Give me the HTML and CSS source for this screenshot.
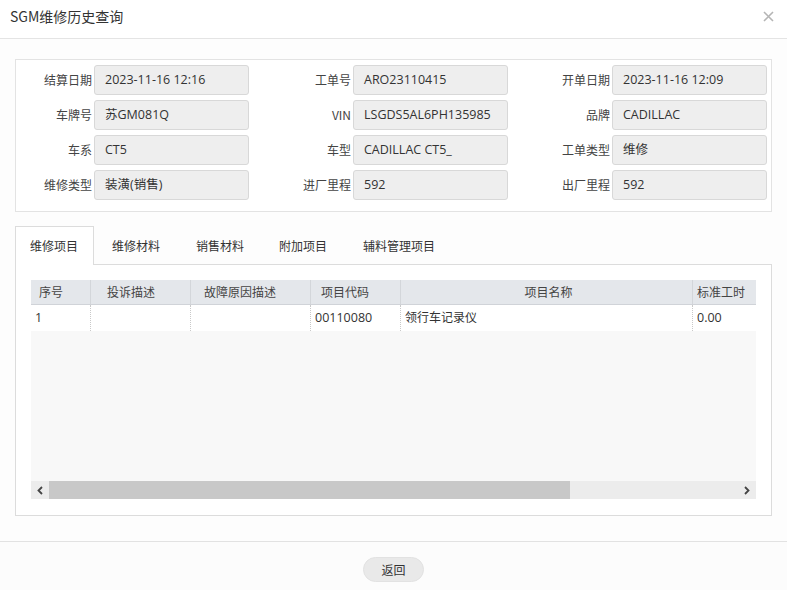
FILE: index.html
```html
<!DOCTYPE html>
<html lang="zh">
<head>
<meta charset="utf-8">
<title>SGM维修历史查询</title>
<link rel="stylesheet" href="styles.css">
</head>
<body>
<div class="dialog">
  <div class="dlg-head">
    <span class="dlg-title">SGM维修历史查询</span>
    <span class="dlg-close">
      <svg width="11" height="11" viewBox="0 0 11 11"><path d="M1 1L10 10M10 1L1 10" stroke="#b5b5b5" stroke-width="1.6" fill="none"/></svg>
    </span>
  </div>
  <div class="dlg-body">
    <div class="form-panel">
      <label class="lbl">结算日期</label><div class="inp">2023-11-16 12:16</div>
      <label class="lbl">工单号</label><div class="inp">ARO23110415</div>
      <label class="lbl">开单日期</label><div class="inp">2023-11-16 12:09</div>
      <label class="lbl">车牌号</label><div class="inp">苏GM081Q</div>
      <label class="lbl">VIN</label><div class="inp">LSGDS5AL6PH135985</div>
      <label class="lbl">品牌</label><div class="inp">CADILLAC</div>
      <label class="lbl">车系</label><div class="inp">CT5</div>
      <label class="lbl">车型</label><div class="inp">CADILLAC CT5_</div>
      <label class="lbl">工单类型</label><div class="inp">维修</div>
      <label class="lbl">维修类型</label><div class="inp">装潢(销售)</div>
      <label class="lbl">进厂里程</label><div class="inp">592</div>
      <label class="lbl">出厂里程</label><div class="inp">592</div>
    </div>

    <div class="tabs">
      <div class="tab-bar">
        <span class="tab active">维修项目</span>
        <span class="tab">维修材料</span>
        <span class="tab">销售材料</span>
        <span class="tab">附加项目</span>
        <span class="tab">辅料管理项目</span>
      </div>
      <div class="tab-panel">
        <div class="grid">
          <div class="grid-head">
            <div class="c c1">序号</div>
            <div class="c c2">投诉描述</div>
            <div class="c c3">故障原因描述</div>
            <div class="c c4">项目代码</div>
            <div class="c c5 center">项目名称</div>
            <div class="c c6">标准工时</div>
          </div>
          <div class="grid-row">
            <div class="c c1">1</div>
            <div class="c c2"></div>
            <div class="c c3"></div>
            <div class="c c4">00110080</div>
            <div class="c c5">领行车记录仪</div>
            <div class="c c6">0.00</div>
          </div>
          <div class="grid-fill"></div>
          <div class="hscroll">
            <span class="arrow">
              <svg width="6" height="9" viewBox="0 0 6 9"><path d="M5 1L1.5 4.5L5 8" stroke="#444" stroke-width="1.8" fill="none"/></svg>
            </span>
            <span class="track"><span class="thumb"></span></span>
            <span class="arrow">
              <svg width="6" height="9" viewBox="0 0 6 9"><path d="M1 1L4.5 4.5L1 8" stroke="#444" stroke-width="1.8" fill="none"/></svg>
            </span>
          </div>
        </div>
      </div>
    </div>
  </div>
  <div class="dlg-foot">
    <button class="btn">返回</button>
  </div>
</div>
</body>
</html>
```

FILE: styles.css
```css
* { box-sizing: border-box; }
html, body { margin: 0; padding: 0; }
body {
  background: #fcfcfc;
  font-family: "Open Sans", "Noto Sans CJK SC", sans-serif;
  font-size: 12.5px;
  color: #333;
  width: 787px;
  height: 590px;
  overflow: hidden;
}
.dialog { width: 787px; height: 590px; display: flex; flex-direction: column; }
.dlg-head {
  height: 39px;
  border-bottom: 1px solid #e4e4e4;
  background: #fff;
  display: flex;
  align-items: center;
  justify-content: space-between;
  padding: 0 13px 0 10px;
  flex: none;
}
.dlg-title { font-size: 14px; color: #333; font-family: "Noto Sans CJK SC", sans-serif; margin-top: -6px; }
.dlg-close { display: flex; margin-top: -6px; }
.dlg-body { padding: 20px 15px 0 15px; height: 503px; border-bottom: 1px solid #e2e2e2; background: #fdfdfd; flex: none; }
.form-panel {
  border: 1px solid #e3e3e3;
  background: #fff;
  display: grid;
  grid-template-columns: 78px 155px 104px 155px 104px 155px;
  grid-auto-rows: 30px;
  row-gap: 5px;
  padding: 5px 0 10px 0;
  height: 153px;
}
.lbl {
  text-align: right;
  padding-right: 2px;
  line-height: 30px;
  color: #444;
  font-family: "Noto Sans CJK SC", sans-serif;
  font-size: 12px;
}
.inp {
  background: #eeeeee;
  border: 1px solid #d8d8d8;
  border-radius: 3px;
  line-height: 28px;
  padding-left: 10px;
  color: #333;
  white-space: nowrap;
  overflow: hidden;
}
.tabs { margin-top: 14px; }
.tab-bar { display: flex; height: 39px; position: relative; z-index: 1; }
.tab {
  font-family: "Noto Sans CJK SC", sans-serif;
  font-size: 12px;
  color: #333;
  line-height: 38px;
  padding: 0 17px;
  border: 1px solid transparent;
  border-bottom: none;
}
.tab:nth-child(3) { padding-right: 16px; }
.tab.active {
  border-color: #dcdcdc;
  background: #fff;
  height: 39px;
  width: 79px;
  padding: 0 14px;
}
.tab-panel {
  border: 1px solid #dcdcdc;
  margin-top: -1px;
  background: #fff;
  height: 252px;
  padding: 15px 15px 0 15px;
}
.grid { width: 725px; background: #f8f8f8; height: 219px; display: flex; flex-direction: column; }
.grid-head, .grid-row { display: flex; white-space: nowrap; }
.grid-head { height: 25px; background: #e4e7eb; border-bottom: 1px solid #d0d3d8; }
.grid-row { height: 26px; background: #fff; }
.c {
  font-family: "Open Sans", "Noto Sans CJK SC", sans-serif;
  font-size: 12.5px;
  padding-left: 4px;
  line-height: 25px;
  overflow: hidden;
  flex: none;
}
.grid-head .c { border-right: 1px solid #d3d6da; color: #444; font-size: 12px; }
.grid-head .c1 { padding-left: 8px; }
.grid-head .c2 { padding-left: 16px; }
.grid-head .c3 { padding-left: 13px; }
.grid-head .c4 { padding-left: 10px; }
.grid-head .c6 { border-right: none; }
.grid-row .c { border-right: 1px dotted #c9c9c9; }
.grid-row .c6 { border-right: none; }
.grid-row .c5 { font-size: 12px; }
.center { text-align: center; }
.c1 { width: 60px; }
.c2 { width: 100px; }
.c3 { width: 120px; }
.c4 { width: 90px; }
.c5 { width: 292px; }
.c6 { width: 63px; }
.grid-fill { flex: 1; background: #f8f8f8; }
.hscroll { height: 18px; display: flex; background: #ececec; }
.arrow { width: 18px; display: flex; align-items: center; justify-content: center; background: #ececec; }
.track { flex: 1; background: #ececec; display: flex; }
.thumb { width: 521px; background: #c8c8c8; }
.dlg-foot { flex: 1; display: flex; justify-content: center; padding-top: 15px; }
.btn {
  width: 61px;
  height: 25px;
  border: 1px solid #e2e2e2;
  border-radius: 13px;
  background: #e9e9e9;
  font-family: "Noto Sans CJK SC", sans-serif;
  font-size: 12px;
  color: #333;
  padding: 0;
}
```
